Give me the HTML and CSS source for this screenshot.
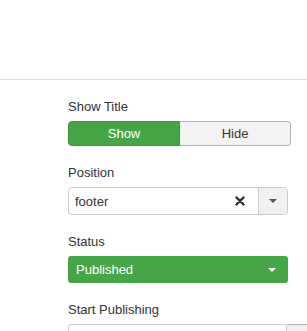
FILE: index.html
```html
<!DOCTYPE html>
<html lang="en">
<head>
    <meta charset="UTF-8">
    <meta name="viewport" content="width=device-width, initial-scale=1.0">
    <title>Module Options</title>
    <link rel="stylesheet" href="styles.css">
</head>
<body>
    <div class="toolbar"></div>

    <div class="form">
        <div class="field">
            <label class="field-label">Show Title</label>
            <div class="btn-group">
                <button class="btn btn-on">Show</button>
                <button class="btn">Hide</button>
            </div>
        </div>

        <div class="field">
            <label class="field-label">Position</label>
            <div class="combo">
                <span class="combo-value">footer</span>
                <span class="combo-clear">
                    <svg width="10" height="10" viewBox="0 0 10 10">
                        <path d="M1.5 1.5 L8.5 8.5 M8.5 1.5 L1.5 8.5" stroke="#2b2b2b" stroke-width="2.4" stroke-linecap="round"/>
                    </svg>
                </span>
                <span class="combo-toggle"><span class="caret"></span></span>
            </div>
        </div>

        <div class="field">
            <label class="field-label">Status</label>
            <div class="select-status">
                <span>Published</span>
                <span class="caret caret-white"></span>
            </div>
        </div>

        <div class="field">
            <label class="field-label">Start Publishing</label>
            <div class="input-append">
                <input type="text" class="date-input">
                <button class="addon"></button>
            </div>
        </div>
    </div>
</body>
</html>
```

FILE: styles.css
```css
body {
    margin: 0;
    font-family: "Liberation Sans", Arial, sans-serif;
    font-size: 13px;
    color: #333;
    background-color: #fff;
    overflow: hidden;
}
.toolbar {
    height: 79px;
    border-bottom: 1px solid #dcdcdc;
}
.form {
    padding: 18px 0 0 68px;
}
.field {
    margin-bottom: 18px;
}
.field-label {
    display: block;
    line-height: 18px;
    margin-bottom: 5px;
    color: #333;
}
.btn-group {
    display: flex;
    width: 223px;
    height: 25px;
    margin-top: 1px;
}
.btn {
    flex: 1;
    font-family: inherit;
    font-size: 13px;
    color: #333;
    background-color: #f3f3f3;
    border: 1px solid #b5b5b5;
    border-left: none;
    border-radius: 0 4px 4px 0;
    padding: 0;
}
.btn-on {
    color: #fff;
    background-color: #46a546;
    border: 1px solid #3c963c;
    border-radius: 4px 0 0 4px;
}
.combo {
    display: flex;
    align-items: center;
    width: 218px;
    height: 26px;
    border: 1px solid #ccc;
    border-radius: 4px;
}
.combo-value {
    flex: 1;
    padding-left: 6px;
}
.combo-clear {
    display: flex;
    width: 20px;
    margin-right: 8px;
    justify-content: center;
}
.combo-toggle {
    display: flex;
    align-items: center;
    justify-content: center;
    width: 28px;
    height: 100%;
    background-color: #f0f0f0;
    border-left: 1px solid #ccc;
    border-radius: 0 4px 4px 0;
}
.caret {
    width: 0;
    height: 0;
    border-left: 4px solid transparent;
    border-right: 4px solid transparent;
    border-top: 4px solid #555;
}
.caret-white {
    border-top-color: #fff;
    margin-right: 4px;
}
.select-status {
    display: flex;
    align-items: center;
    justify-content: space-between;
    box-sizing: border-box;
    width: 220px;
    height: 27px;
    padding: 0 8px;
    color: #fff;
    background-color: #46a546;
    border-radius: 3px;
}
.input-append {
    display: flex;
    height: 28px;
}
.date-input {
    flex-shrink: 0;
    box-sizing: border-box;
    width: 219px;
    height: 28px;
    border: 1px solid #ccc;
    border-radius: 3px 0 0 3px;
    margin: 0;
}
.addon {
    flex-shrink: 0;
    width: 34px;
    height: 28px;
    background-color: #f0f0f0;
    border: 1px solid #b3b3b3;
    border-left: none;
}
```
